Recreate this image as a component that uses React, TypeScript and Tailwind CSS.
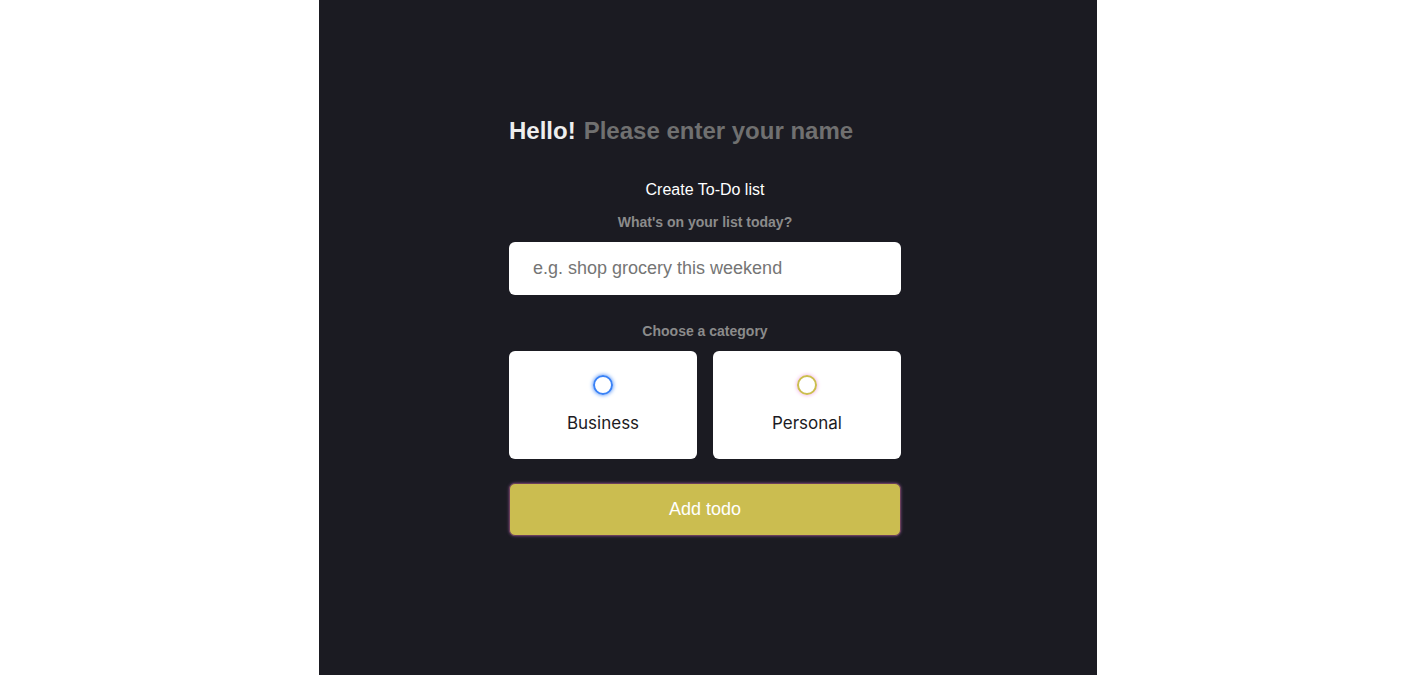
import React, { useState } from 'react';

const App: React.FC = () => {
  const [name, setName] = useState('');
  const [todo, setTodo] = useState('');
  const [category, setCategory] = useState('');

  return (
    <div className="min-h-screen bg-white" style={{ fontFamily: '"Liberation Sans", Arial, sans-serif' }}>
      <main className="mx-auto w-[778px] min-h-[675px] bg-[#1b1b22] pl-[190px] pt-[113px]">
        <section className="w-[392px]">
          {/* Greeting */}
          <h2 className="flex items-center text-[24px] font-bold text-[#eeeeee]">
            Hello!
            <input
              type="text"
              value={name}
              onChange={(e) => setName(e.target.value)}
              placeholder="Please enter your name"
              className="ml-2 flex-1 bg-transparent text-[24px] font-bold text-[#eeeeee] placeholder:text-[#707070] outline-none"
            />
          </h2>

          {/* Create todo */}
          <div className="mt-[29px] flex flex-col">
            <h4 className="text-center text-[16px] text-white">Create To-Do list</h4>
            <p className="mt-[10px] text-center text-[14px] font-bold text-[#8b8b8b]">
              What's on your list today?
            </p>
            <input
              type="text"
              value={todo}
              onChange={(e) => setTodo(e.target.value)}
              placeholder="e.g. shop grocery this weekend"
              className="mt-[9px] h-[53px] w-full rounded-md bg-white px-6 text-[18px] text-[#333] placeholder:text-[#757575] outline-none"
            />

            <p className="mt-[26px] text-center text-[14px] font-bold text-[#8b8b8b]">Choose a category</p>
            <div className="mt-[9px] grid grid-cols-2 gap-4">
              <label className="flex h-[108px] cursor-pointer flex-col items-center rounded-md bg-white pt-[24px]">
                <input
                  type="radio"
                  name="category"
                  value="business"
                  checked={category === 'business'}
                  onChange={() => setCategory('business')}
                  className="sr-only"
                />
                <span className="block h-[20px] w-[20px] rounded-full border-2 border-[#3a82f6] shadow-[0_0_4px_#3a82f6]" />
                <span className="mt-[16px] text-[17px] text-[#1c1b23]" style={{ fontFamily: 'Inter, sans-serif' }}>
                  Business
                </span>
              </label>
              <label className="flex h-[108px] cursor-pointer flex-col items-center rounded-md bg-white pt-[24px]">
                <input
                  type="radio"
                  name="category"
                  value="personal"
                  checked={category === 'personal'}
                  onChange={() => setCategory('personal')}
                  className="sr-only"
                />
                <span className="block h-[20px] w-[20px] rounded-full border-2 border-[#cbbd4f] shadow-[0_0_4px_#f0a0e0]" />
                <span className="mt-[16px] text-[17px] text-[#1c1b23]" style={{ fontFamily: 'Inter, sans-serif' }}>
                  Personal
                </span>
              </label>
            </div>

            <button
              type="button"
              className="mt-[24px] h-[53px] w-full rounded-md border border-[#6b3f5a] bg-[#cbbd50] text-[18px] text-white shadow-[0_0_3px_#7a4a80]"
            >
              Add todo
            </button>
          </div>
        </section>
      </main>
    </div>
  );
};

export default App;
